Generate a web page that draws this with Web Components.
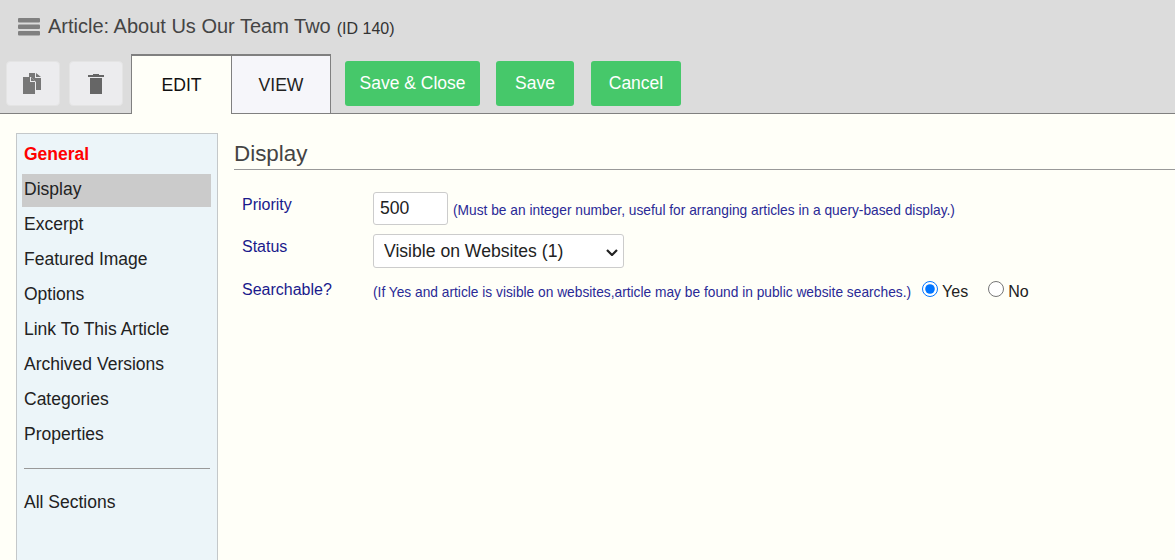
<!DOCTYPE html>
<html>
<head>
<meta charset="utf-8">
<title>Article</title>
<style>
    html, body { margin: 0; height: 100%; overflow: hidden; }
    body { background: #fffff8; font-family: "Liberation Sans", Arial, sans-serif; }
</style>
</head>
<body>
<article-page></article-page>

<script>
class Icon_Button extends HTMLElement {
    constructor() {
        super()
        this.attachShadow({ mode: 'open' }).innerHTML = `
            <style>
                :host {
                    display: flex;
                    box-sizing: border-box;
                    align-items: center;
                    justify-content: center;
                    width: 54px;
                    height: 45px;
                    background: #ececee;
                    border: 1px solid #e4e4e4;
                    border-radius: 4px;
                }
            </style>
            <slot></slot>
        `
    }
}

class Action_Button extends HTMLElement {
    constructor() {
        super()
        this.attachShadow({ mode: 'open' }).innerHTML = `
            <style>
                :host {
                    display: flex;
                    box-sizing: border-box;
                    align-items: center;
                    justify-content: center;
                    height: 45px;
                    background: #46c86a;
                    border-radius: 3px;
                    color: #fff;
                    font-size: 17.5px;
                }
            </style>
            <slot></slot>
        `
    }
}

class Tab_Item extends HTMLElement {
    constructor() {
        super()
        this.attachShadow({ mode: 'open' }).innerHTML = `
            <style>
                :host {
                    display: flex;
                    box-sizing: border-box;
                    align-items: center;
                    justify-content: center;
                    width: 100px;
                    height: 60px;
                    background: #f6f6fa;
                    border: 1px solid #808080;
                    border-width: 2px 1px 1px 1px;
                    font-size: 17.6px;
                    color: #222;
                    padding-top: 2px;
                }
                :host([active]) { width: 101px; background: #fffff8; color: #111; border-bottom-width: 0; padding-top: 1px; }
            </style>
            <slot></slot>
        `
    }
}

class Top_Bar extends HTMLElement {
    constructor() {
        super()
        this.attachShadow({ mode: 'open' }).innerHTML = `
            <style>
                :host {
                    display: block;
                    box-sizing: border-box;
                    height: 114px;
                    background: #dcdcdc;
                    border-bottom: 1px solid #808080;
                }
                .title {
                    display: flex;
                    align-items: center;
                    box-sizing: border-box;
                    height: 54px;
                    padding: 0 0 2px 18px;
                    color: #444;
                    font-size: 20px;
                }
                .title svg { margin: 1px 8px 0 0; }
                .title small { font-size: 16px; margin-left: 6px; color: #333; padding-top: 5px; }
                .tools { display: flex; align-items: flex-start; padding-left: 6px; }
                .icons { display: flex; gap: 9px; padding-top: 7px; margin-right: 8px; }
                .copy { margin-left: -1px; }
                .tabs { display: flex; }
                tab-item + tab-item { margin-left: -1px; }
                .actions { display: flex; gap: 16px; padding: 7px 0 0 14px; }
                .cancel { margin-left: 1px; }
            </style>
            <div class="title">
                <svg width="22" height="18" viewBox="0 0 22 18" fill="#808080">
                    <rect y="0" width="22" height="4.5" rx="1"/>
                    <rect y="6.5" width="22" height="4.5" rx="1"/>
                    <rect y="13" width="22" height="4.5" rx="1"/>
                </svg>
                <span>Article: About Us Our Team Two</span><small>(ID 140)</small>
            </div>
            <div class="tools">
                <div class="icons">
                    <icon-button>
                        <svg class="copy" width="19" height="21" viewBox="0 0 19 21" fill="#777">
                            <path d="M6 0h6v5h6v12h-5V9L8 4H6z"/>
                            <path d="M13 0l5 4h-5z"/>
                            <path d="M0 4h7v5h5v12H0z"/>
                            <path d="M8 4l4 4H8z"/>
                        </svg>
                    </icon-button>
                    <icon-button>
                        <svg width="16" height="20" viewBox="0 0 16 20" fill="#666">
                            <path d="M5 0h6v1h5v2H0V1h5z"/>
                            <path d="M2 4h12v16H2z"/>
                        </svg>
                    </icon-button>
                </div>
                <div class="tabs">
                    <tab-item active>EDIT</tab-item>
                    <tab-item>VIEW</tab-item>
                </div>
                <div class="actions">
                    <action-button style="width:135px">Save &amp; Close</action-button>
                    <action-button style="width:78px">Save</action-button>
                    <action-button class="cancel" style="width:90px">Cancel</action-button>
                </div>
            </div>
        `
    }
}

class Side_Menu extends HTMLElement {
    constructor() {
        super()
        this.attachShadow({ mode: 'open' }).innerHTML = `
            <style>
                :host {
                    display: block;
                    box-sizing: border-box;
                    width: 202px;
                    height: 460px;
                    flex: none;
                    background: #ecf5f9;
                    border: 1px solid #c4c8ca;
                    padding: 3px 6px 0 5px;
                    font-size: 17.5px;
                    color: #222;
                }
                div { height: 35px; line-height: 35px; padding-left: 2px; white-space: nowrap; }
                .head { color: #f00; font-weight: bold; }
                .sel { background: #cbcbcb; height: 33px; line-height: 31px; margin: 2px 0 0; }
                hr { border: 0; border-top: 1px solid #999; margin: 16px 1px 16px 2px; }
            </style>
            <div class="head">General</div>
            <div class="sel">Display</div>
            <div>Excerpt</div>
            <div>Featured Image</div>
            <div>Options</div>
            <div>Link To This Article</div>
            <div>Archived Versions</div>
            <div>Categories</div>
            <div>Properties</div>
            <hr>
            <div>All Sections</div>
        `
    }
}

class Display_Form extends HTMLElement {
    constructor() {
        super()
        this.attachShadow({ mode: 'open' }).innerHTML = `
            <style>
                :host { display: block; flex: 1; min-width: 0; color: #1a1a8c; font-size: 16px; }
                h2 {
                    margin: 0;
                    height: 37px;
                    line-height: 41px;
                    font-size: 22.4px;
                    font-weight: normal;
                    color: #444;
                    border-bottom: 1px solid #999;
                    box-sizing: border-box;
                }
                .form {
                    display: grid;
                    grid-template-columns: 131px 1fr;
                    padding: 22px 0 0 8px;
                    row-gap: 9px;
                    align-items: start;
                }
                .label { padding-top: 4px; }
                .row { display: flex; align-items: center; white-space: nowrap; }
                .searchable { padding-top: 4px; align-items: flex-start; }
                .hint { font-size: 13.75px; color: #2a2a96; margin-top: 4px; }
                input[type=text] {
                    box-sizing: border-box;
                    width: 75px;
                    height: 33px;
                    padding: 0 6px;
                    margin: 0 5px 0 0;
                    border: 1px solid #ccc;
                    border-radius: 3px;
                    background: #fff;
                    font: 17.6px "Liberation Sans", Arial, sans-serif;
                    color: #222;
                }
                select {
                    box-sizing: border-box;
                    width: 251px;
                    height: 34px;
                    padding: 0 10px;
                    border: 1px solid #ccc;
                    border-radius: 3px;
                    appearance: none;
                    background: #fff url("data:image/svg+xml,%3Csvg xmlns='http://www.w3.org/2000/svg' width='12' height='7' viewBox='0 0 12 7'%3E%3Cpath d='M1 1l5 5 5-5' fill='none' stroke='%23222' stroke-width='2.2'/%3E%3C/svg%3E") no-repeat 232px 14px;
                    font: 17.6px "Liberation Sans", Arial, sans-serif;
                    color: #222;
                }
                label { display: flex; align-items: flex-start; font-size: 16px; color: #222; }
                label span { padding-top: 2px; }
                input[type=radio] { width: 16px; height: 16px; margin: 0 4px 0 0; }
                .yes { margin-left: 11px; }
                .no { margin-left: 20px; }
            </style>
            <h2>Display</h2>
            <div class="form">
                <div class="label">Priority</div>
                <div class="row">
                    <input type="text" value="500">
                    <span class="hint">(Must be an integer number, useful for arranging articles in a query-based display.)</span>
                </div>
                <div class="label">Status</div>
                <div class="row">
                    <select><option>Visible on Websites (1)</option></select>
                </div>
                <div class="label">Searchable?</div>
                <div class="row searchable">
                    <span class="hint">(If Yes and article is visible on websites,article may be found in public website searches.)</span>
                    <label class="yes"><input type="radio" name="s" checked><span>Yes</span></label>
                    <label class="no"><input type="radio" name="s"><span>No</span></label>
                </div>
            </div>
        `
    }
}

class Article_Page extends HTMLElement {
    constructor() {
        super()
        this.attachShadow({ mode: 'open' }).innerHTML = `
            <style>
                :host { display: flex; flex-direction: column; height: 100vh; overflow: hidden; }
                main { flex: 1; display: flex; gap: 16px; padding: 19px 0 0 16px; min-height: 0; }
            </style>
            <top-bar></top-bar>
            <main>
                <side-menu></side-menu>
                <display-form></display-form>
            </main>
        `
    }
}

customElements.define('icon-button', Icon_Button)
customElements.define('action-button', Action_Button)
customElements.define('tab-item', Tab_Item)
customElements.define('top-bar', Top_Bar)
customElements.define('side-menu', Side_Menu)
customElements.define('display-form', Display_Form)
customElements.define('article-page', Article_Page)
</script>
</body>
</html>
